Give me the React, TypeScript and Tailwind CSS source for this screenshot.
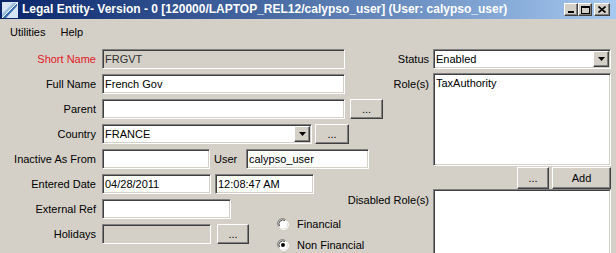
import React from 'react';

const sunken =
  'border border-t-[#808080] border-l-[#808080] border-b-white border-r-white shadow-[inset_1px_1px_0_#404040,inset_-1px_-1px_0_#d4d0c8]';
const raised =
  'border border-t-white border-l-white border-b-[#404040] border-r-[#404040] shadow-[inset_-1px_-1px_0_#808080] bg-[#d4d0c8]';

const Field: React.FC<{ w: string; value?: string; disabled?: boolean; className?: string }> = ({ w, value, disabled, className }) => (
  <div className={`${sunken} ${w} h-5 flex items-center px-[2px] ${disabled ? 'bg-[#d4d0c8] text-[#303030]' : 'bg-white text-black'} ${className || ''}`}>
    <span className="whitespace-nowrap">{value}</span>
  </div>
);

const Btn: React.FC<{ w: string; label: string; h?: string; className?: string }> = ({ w, label, h, className }) => (
  <div className={`${raised} ${w} ${h || 'h-5'} flex items-center justify-center text-black ${className || ''}`}>{label}</div>
);

const Arrow = () => (
  <div className={`${raised} w-4 h-full flex items-center justify-center`}>
    <svg width="7" height="4" viewBox="0 0 7 4">
      <path d="M0 0h7L3.5 4z" fill="#000" />
    </svg>
  </div>
);

const Combo: React.FC<{ w: string; value: string }> = ({ w, value }) => (
  <div className={`${sunken} ${w} h-5 flex items-stretch bg-white p-[1px]`}>
    <span className="flex-1 flex items-center pl-[1px] whitespace-nowrap">{value}</span>
    <Arrow />
  </div>
);

const Label: React.FC<{ children: React.ReactNode; red?: boolean }> = ({ children, red }) => (
  <div className={`w-[96px] text-right whitespace-nowrap ${red ? 'text-[#e3161f]' : 'text-black'}`}>{children}</div>
);

const Radio: React.FC<{ checked?: boolean; label: string }> = ({ checked, label }) => (
  <div className="flex items-center h-5">
    <svg width="12" height="12" viewBox="0 0 12 12">
      <path d="M1.5 8.5A5 5 0 0 1 8.5 1.5" stroke="#808080" strokeWidth="1" fill="none" />
      <circle cx="6" cy="6" r="4.5" fill="#fff" />
      <path d="M2.5 8A4 4 0 0 1 8 2.5" stroke="#404040" strokeWidth="1" fill="none" />
      <path d="M3.5 10.5A5 5 0 0 0 10.5 3.5" stroke="#fff" strokeWidth="1" fill="none" />
      {checked && <circle cx="6" cy="6" r="2" fill="#000" />}
    </svg>
    <span className="ml-[8px] whitespace-nowrap">{label}</span>
  </div>
);

const Row: React.FC<{ children: React.ReactNode }> = ({ children }) => (
  <div className="flex items-center h-5">{children}</div>
);

export default function App() {
  return (
    <div className="w-[616px] h-[253px] overflow-hidden bg-[#d4d0c8] text-[11px] leading-[13px] font-['Liberation_Sans',Arial,sans-serif] text-black">
      {/* title bar */}
      <div className="h-[19px] flex items-center bg-gradient-to-r from-[#0a246a] to-[#a6caf0]">
        <svg width="16" height="16" viewBox="0 0 16 16" className="ml-[2px]">
          <rect x="0" y="0" width="16" height="16" fill="#d8e6f4" />
          <path d="M0 16L15 1v3L4 16z" fill="#3b6fb6" />
          <path d="M0 16V12L11 1h4z" fill="#9cc0e6" />
          <path d="M0 16L16 0" stroke="#fff" strokeWidth="1" />
        </svg>
        <span className="ml-[4px] text-white font-bold text-[12px] whitespace-nowrap">
          Legal Entity- Version - 0 [120000/LAPTOP_REL12/calypso_user] (User: calypso_user)
        </span>
        <div className="ml-auto mr-[6px] flex items-center">
          <div className={`${raised} w-[14px] h-[13px] flex items-end justify-center pb-[2px]`}>
            <div className="w-[6px] h-[2px] bg-black" />
          </div>
          <div className={`${raised} w-[14px] h-[13px] flex items-center justify-center`}>
            <div className="w-[9px] h-[8px] border border-black border-t-2" />
          </div>
          <div className={`${raised} w-[16px] h-[13px] ml-[2px] flex items-center justify-center`}>
            <svg width="8" height="7" viewBox="0 0 8 7">
              <path d="M0.5 0.5l7 6M7.5 0.5l-7 6" stroke="#000" strokeWidth="1.6" />
            </svg>
          </div>
        </div>
      </div>

      {/* menu bar */}
      <div className="h-[21px] flex items-center pt-[5px] pl-[10px] gap-[15px]">
        <span>Utilities</span>
        <span>Help</span>
      </div>

      {/* form */}
      <div className="flex pt-[9px]">
        {/* left column */}
        <div className="w-[388px] flex flex-col gap-[5px]">
          <Row>
            <Label red>Short Name</Label>
            <Field w="w-[243px]" value="FRGVT" disabled className="ml-[6px]" />
          </Row>
          <Row>
            <Label>Full Name</Label>
            <Field w="w-[243px]" value="French Gov" className="ml-[6px]" />
          </Row>
          <Row>
            <Label>Parent</Label>
            <Field w="w-[243px]" className="ml-[6px]" />
            <Btn w="w-[33px]" label="..." className="ml-[5px]" />
          </Row>
          <Row>
            <Label>Country</Label>
            <div className="ml-[6px]">
              <Combo w="w-[210px]" value="FRANCE" />
            </div>
            <Btn w="w-[34px]" label="..." className="ml-[3px]" />
          </Row>
          <Row>
            <Label>Inactive As From</Label>
            <Field w="w-[108px]" className="ml-[6px]" />
            <span className="ml-[4px] w-[32px]">User</span>
            <Field w="w-[123px]" value="calypso_user" />
          </Row>
          <Row>
            <Label>Entered Date</Label>
            <Field w="w-[109px]" value="04/28/2011" className="ml-[6px]" />
            <Field w="w-[99px]" value="12:08:47 AM" className="ml-[4px]" />
          </Row>
          <div className="flex">
            <div className="w-[277px] flex flex-col gap-[5px]">
              <Row>
                <Label>External Ref</Label>
                <Field w="w-[129px]" className="ml-[6px]" />
              </Row>
              <Row>
                <Label>Holidays</Label>
                <Field w="w-[109px]" disabled className="ml-[6px]" />
                <Btn w="w-[32px]" label="..." className="ml-[6px]" />
              </Row>
            </div>
            <div className="flex flex-col mt-[15px] gap-[1px]">
              <Radio label="Financial" />
              <Radio checked label="Non Financial" />
            </div>
          </div>
        </div>

        {/* right column */}
        <div className="w-[223px] flex flex-col">
          <div className="flex items-center h-5">
            <div className="w-[41px] text-right">Status</div>
            <div className="ml-[4px]">
              <Combo w="w-[178px]" value="Enabled" />
            </div>
          </div>
          <div className="flex mt-[4px]">
            <div className="w-[41px] flex justify-end pt-[5px] whitespace-nowrap">Role(s)</div>
            <div className={`${sunken} ml-[4px] w-[178px] h-[93px] bg-white px-[2px] pt-[3px]`}>TaxAuthority</div>
          </div>
          <div className="flex justify-end mt-[1px]">
            <Btn w="w-[32px]" h="h-[22px]" label="..." />
            <Btn w="w-[59px]" h="h-[22px]" label="Add" className="ml-[3px]" />
          </div>
          <div className="flex">
            <div className="w-[41px] flex justify-end pt-[5px] whitespace-nowrap">
              <span className="whitespace-nowrap">Disabled Role(s)</span>
            </div>
            <div className={`${sunken} ml-[4px] w-[178px] h-[80px] bg-white`} />
          </div>
        </div>
      </div>
    </div>
  );
}
